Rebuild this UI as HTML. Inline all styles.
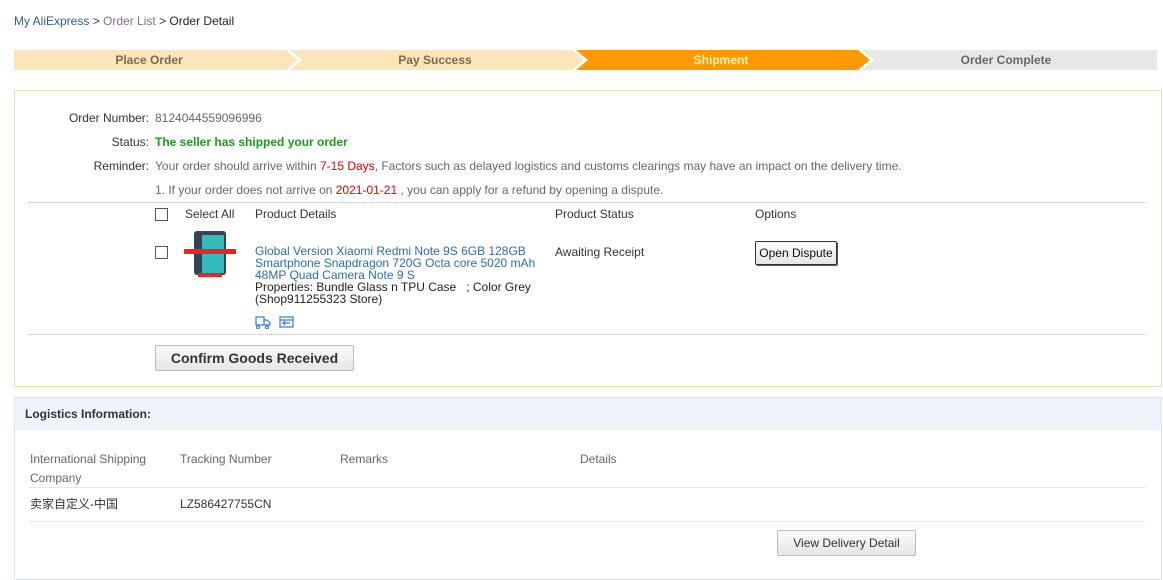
<!DOCTYPE html>
<html><head><meta charset="utf-8"><style>
body{margin:0;width:1163px;height:580px;background:#fff;font-family:"Liberation Sans","Noto Sans CJK SC",sans-serif;font-size:12px;color:#333;position:relative;overflow:hidden}
.a{position:absolute;white-space:nowrap}
.lbl{position:absolute;width:135px;left:14px;text-align:right}
.chk{position:absolute;width:11px;height:11px;border:1px solid #555;background:#fff}
.dot{position:absolute;left:29px;width:1117px;border-top:1px dotted #bbb}
.btn{position:absolute;border:1px solid #bbb;background:linear-gradient(#fafafa,#e6e6e6);border-radius:2px;text-align:center}
</style></head><body>
<div class="a" style="left:14px;top:14px"><span style="color:#2d5c9c">My AliExpress</span> &gt; <span style="color:#8a6a8a">Order List</span> &gt; <span style="color:#222">Order Detail</span></div>
<svg class="a" style="left:14px;top:50px" width="1144" height="20">
<polygon points="0,0 272,0 284,10 272,20 0,20" fill="#fde5bb"/>
<polygon points="276,0 558,0 570,10 558,20 276,20 288,10" fill="#fde5bb"/>
<polygon points="562,0 844,0 856,10 844,20 562,20 574,10" fill="#ff9900"/>
<polygon points="848,0 1143,0 1143,20 848,20 860,10" fill="#e8e8e8"/>
<text x="135" y="14" font-size="12" font-weight="bold" fill="#7a6a50" text-anchor="middle" font-family="Liberation Sans">Place Order</text>
<text x="421" y="14" font-size="12" font-weight="bold" fill="#7a6a50" text-anchor="middle" font-family="Liberation Sans">Pay Success</text>
<text x="707" y="14" font-size="12" font-weight="bold" fill="#fff3b0" text-anchor="middle" font-family="Liberation Sans">Shipment</text>
<text x="992" y="14" font-size="12" font-weight="bold" fill="#666" text-anchor="middle" font-family="Liberation Sans">Order Complete</text>
</svg>
<div class="a" style="left:14px;top:90px;width:1146px;height:295px;border:1px solid #e5dfb5"></div>
<div class="lbl" style="top:111px">Order Number:</div><div class="a" style="left:155px;top:111px;color:#666">8124044559096996</div>
<div class="lbl" style="top:135px">Status:</div><div class="a" style="left:155px;top:135px;color:#1a9a1a;font-weight:bold">The seller has shipped your order</div>
<div class="lbl" style="top:159px">Reminder:</div><div class="a" style="left:155px;top:159px;color:#666">Your order should arrive within <span style="color:#d00">7-15 Days</span>, Factors such as delayed logistics and customs clearings may have an impact on the delivery time.</div>
<div class="a" style="left:155px;top:183px;color:#666">1. If your order does not arrive on <span style="color:#d00">2021-01-21</span> , you can apply for a refund by opening a dispute.</div>
<div class="dot" style="top:202px"></div>
<div class="chk" style="left:155px;top:208px"></div>
<div class="a" style="left:185px;top:207px">Select All</div>
<div class="a" style="left:255px;top:207px">Product Details</div>
<div class="a" style="left:555px;top:207px">Product Status</div>
<div class="a" style="left:755px;top:207px">Options</div>
<div class="chk" style="left:155px;top:246px"></div>
<svg class="a" style="left:184px;top:230px" width="54" height="48"><rect x="10" y="1" width="32" height="44" rx="3" fill="#345"/><rect x="18" y="5" width="22" height="38" fill="#3bb"/><rect x="0" y="19" width="52" height="5" fill="#e22"/><rect x="14" y="43" width="24" height="4" fill="#e22"/></svg>
<div class="a" style="left:255px;top:245px;color:#2d6bb5;line-height:12px">Global Version Xiaomi Redmi Note 9S 6GB 128GB<br>Smartphone Snapdragon 720G Octa core 5020 mAh<br>48MP Quad Camera Note 9 S</div>
<div class="a" style="left:255px;top:281px;color:#222;line-height:12px">Properties: Bundle Glass n TPU Case &nbsp; ; Color Grey<br>(Shop911255323 Store)</div>
<svg class="a" style="left:255px;top:315px" width="42" height="14" fill="none" stroke="#3a7bc8" stroke-width="1.2"><path d="M1 2h8v8H1zM9 5h3l3 3v2H9M3 11a1.5 1.5 0 1 0 .1 0M12 11a1.5 1.5 0 1 0 .1 0"/><rect x="25" y="2" width="13" height="10"/><path d="M25 5h13M35 8h-7l2-2M28 8l2 2"/></svg>
<div class="a" style="left:555px;top:245px">Awaiting Receipt</div>
<div class="btn" style="left:755px;top:241px;width:80px;height:22px;line-height:22px;border:1px solid #333;box-shadow:1px 1px 0 #555;color:#111">Open Dispute</div>
<div class="dot" style="top:334px"></div>
<div class="btn" style="left:155px;top:345px;width:197px;height:24px;line-height:24px;font-size:14px;font-weight:bold;color:#333">Confirm Goods Received</div>
<div class="a" style="left:14px;top:397px;width:1146px;height:181px;border:1px solid #dde3ee"></div>
<div class="a" style="left:15px;top:398px;width:1146px;height:32px;background:#eef3fc"></div>
<div class="a" style="left:25px;top:407px;font-weight:bold;color:#333">Logistics Information:</div>
<div class="a" style="left:30px;top:450px;color:#666;line-height:19px">International Shipping<br>Company</div>
<div class="a" style="left:180px;top:452px;color:#666">Tracking Number</div>
<div class="a" style="left:340px;top:452px;color:#666">Remarks</div>
<div class="a" style="left:580px;top:452px;color:#666">Details</div>
<div class="a" style="left:29px;top:487px;width:1117px;border-top:1px solid #e8e8e8"></div>
<div class="a" style="left:30px;top:495px">卖家自定义-中国</div>
<div class="a" style="left:180px;top:497px">LZ586427755CN</div>
<div class="a" style="left:29px;top:521px;width:1117px;border-top:1px dotted #ddd"></div>
<div class="btn" style="left:777px;top:530px;width:137px;height:24px;line-height:24px;color:#333">View Delivery Detail</div>
</body></html>
